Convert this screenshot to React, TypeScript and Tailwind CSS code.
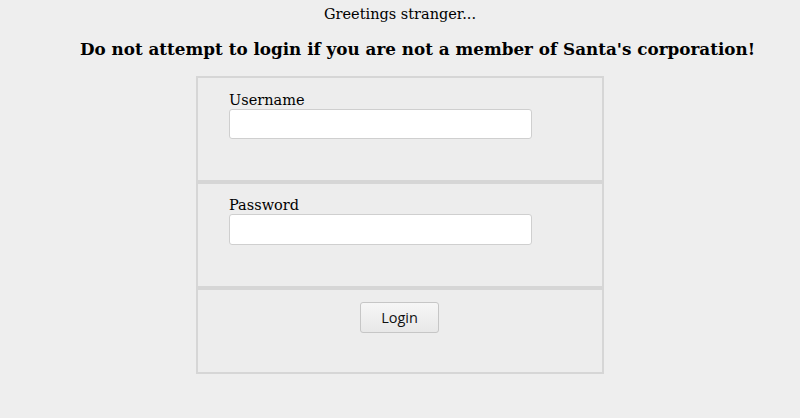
import React from "react";

export default function App() {
  return (
    <div className="min-h-[418px] bg-[#eeeeee] text-black font-['DejaVu_Serif',serif]">
      <p className="text-center text-[14.5px] leading-[18px] pt-[5px]">Greetings stranger...</p>
      <h2 className="text-center font-bold text-[16.8px] leading-[22px] mt-[15px] pl-[35px]">
        Do not attempt to login if you are not a member of Santa's corporation!
      </h2>
      <form className="mt-[16px] w-[408px] ml-[196px]" onSubmit={(e) => e.preventDefault()}>
        <div className="h-[106px] border-2 border-[#d6d6d6] bg-[#ededed] pl-[31px] pt-[13px]">
          <label className="block text-[14.5px] leading-[18px]">Username</label>
          <input className="block w-[303px] h-[30px] bg-white border border-[#cfcfcf] rounded-[3px]" />
        </div>
        <div className="h-[106px] border-2 border-[#d6d6d6] bg-[#ededed] pl-[31px] pt-[12px]">
          <label className="block text-[14.5px] leading-[18px]">Password</label>
          <input type="password" className="block w-[303px] h-[31px] bg-white border border-[#cfcfcf] rounded-[3px]" />
        </div>
        <div className="h-[86px] border-2 border-[#d6d6d6] bg-[#ededed] flex justify-center pt-[12px] pr-[1px]">
          <button className="w-[79px] h-[31px] rounded-[3px] border border-[#c6c6c6] bg-gradient-to-b from-[#f6f6f6] to-[#e8e8e8] text-[14.5px] text-[#111] font-['Open_Sans',sans-serif]">
            Login
          </button>
        </div>
      </form>
    </div>
  );
}
